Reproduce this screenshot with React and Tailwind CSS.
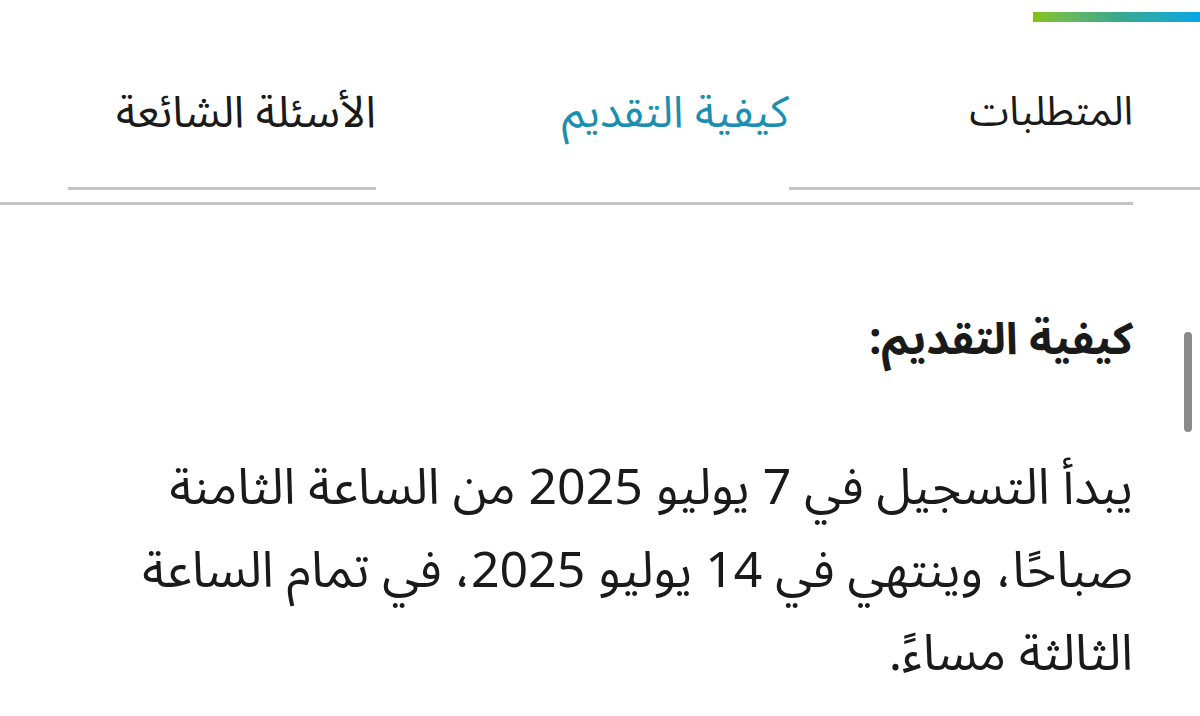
export default function App() {
  const font = { fontFamily: '"Noto Sans Arabic", "Noto Naskh Arabic", "DejaVu Sans", sans-serif' }
  return (
    <div dir="rtl" className="relative w-[1200px] h-[716px] overflow-hidden bg-white text-[#1a1a1a]" style={font}>
      <div className="flex justify-start pt-[12px]">
        <div className="w-[167px] h-[10px] bg-gradient-to-l from-[#05a6e8] via-[#3aa88a] to-[#86c300]" />
      </div>

      <div className="flex items-end h-[168px]">
        <div className="w-[411px] pr-[67px] pb-[44px] border-b-[3px] border-[#c4c4c4] text-[40px] leading-[60px]">
          المتطلبات
        </div>
        <div className="w-[413px] pb-[47px] text-[44px] leading-[60px] text-[#1a8fb0]">
          كيفية التقديم
        </div>
        <div className="w-[308px] pb-[44px] border-b-[3px] border-[#c4c4c4] text-[44px] leading-[60px]">
          الأسئلة الشائعة
        </div>
      </div>

      <div className="mr-[67px] mt-[12px] h-[3px] bg-[#c4c4c4]" />

      <div className="pr-[67px] pl-[30px] pt-[100px]">
        <h2 className="text-[44px] font-bold leading-[70px]">كيفية التقديم:</h2>
        <p className="mt-[72px] text-[50px] leading-[83px]">
          يبدأ التسجيل في 7 يوليو 2025 من الساعة الثامنة
          <br />
          صباحًا، وينتهي في 14 يوليو 2025، في تمام الساعة
          <br />
          الثالثة مساءً.
        </p>
      </div>

      <div className="absolute right-[8px] top-[332px] w-[8px] h-[100px] rounded-full bg-[#8a8a8a]" />
    </div>
  )
}
